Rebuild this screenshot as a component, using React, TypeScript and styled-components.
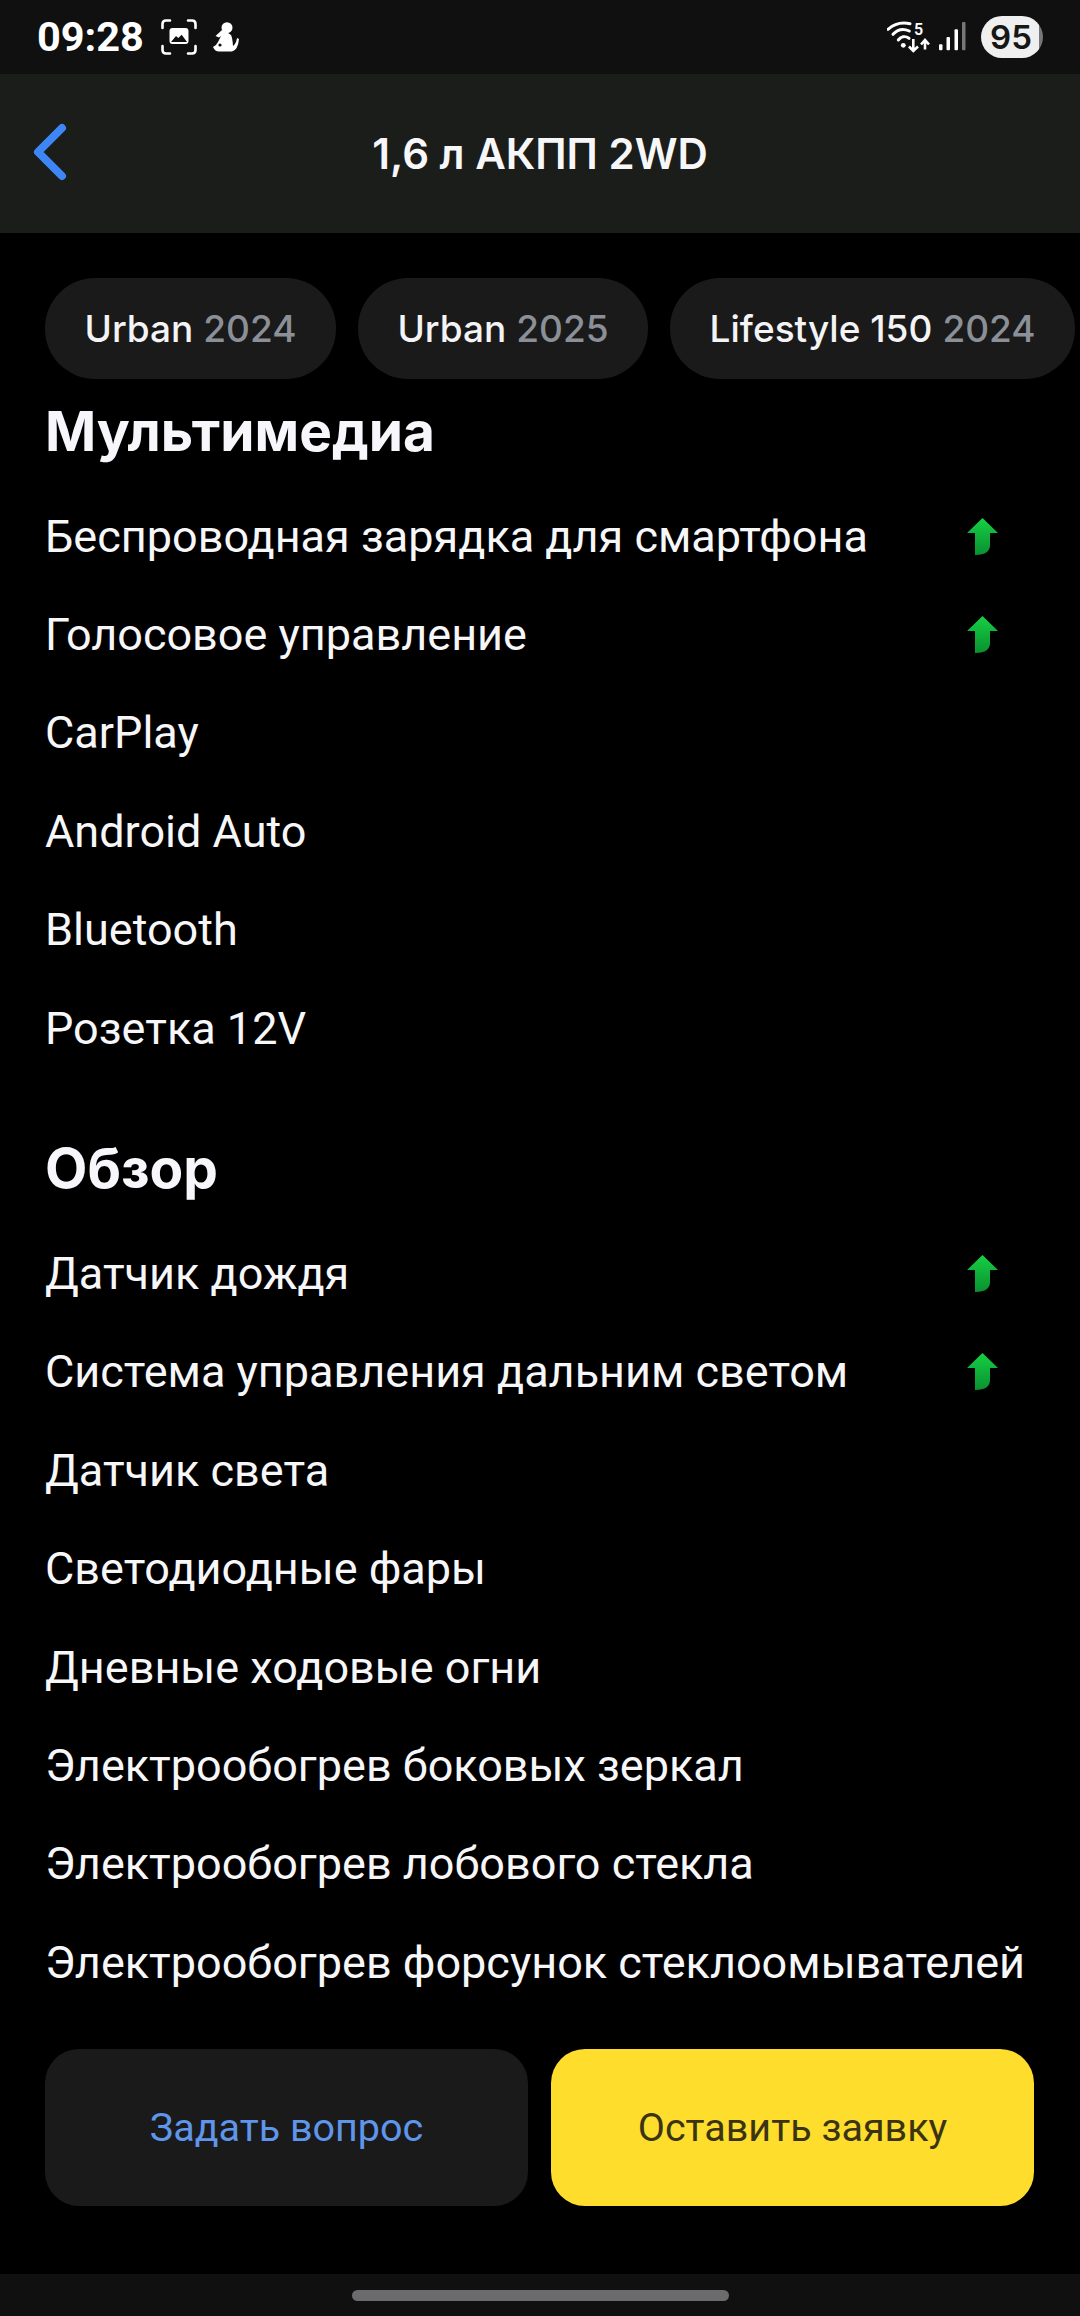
import React from 'react'
import styled, { createGlobalStyle } from 'styled-components'

const GlobalStyle = createGlobalStyle`
  html, body {
    margin: 0;
    padding: 0;
    background: #000;
  }
  * {
    box-sizing: border-box;
  }
`

const Screen = styled.div`
  width: 1080px;
  height: 2316px;
  background: #000;
  display: flex;
  flex-direction: column;
  overflow: hidden;
  font-family: Roboto, "Noto Sans", sans-serif;
  color: #f7f7f9;
`

const StatusBar = styled.div`
  height: 74px;
  background: #101010;
  display: flex;
  align-items: center;
  justify-content: space-between;
  padding: 0 37px;
  flex: none;
`

const StatusGroup = styled.div`
  display: flex;
  align-items: center;
`

const Clock = styled.span`
  font-family: Roboto, sans-serif;
  font-weight: 700;
  font-size: 41.5px;
  line-height: 44px;
  color: #fff;
  margin-right: 17px;
`

const StatusIcon = styled.svg<{ $gap?: number }>`
  display: block;
  margin-right: ${(p) => p.$gap ?? 0}px;
`

const Battery = styled.div`
  width: 62px;
  height: 42px;
  border-radius: 21px;
  background: linear-gradient(90deg, #efefef 93%, #77777a 93%);
  color: #161616;
  font-family: Inter, sans-serif;
  font-weight: 600;
  font-size: 33px;
  display: flex;
  align-items: center;
  justify-content: center;
  padding-right: 2px;
`

const Header = styled.header`
  height: 159px;
  background: #1b1d1b;
  flex: none;
  display: flex;
  align-items: center;
  justify-content: center;
  position: relative;
`

const BackButton = styled.svg`
  position: absolute;
  left: 30px;
  top: 47px;
`

const Title = styled.h1`
  margin: 0;
  font-family: Inter, sans-serif;
  font-weight: 600;
  font-size: 42px;
  color: #f7f7f9;
`

const Chips = styled.div`
  display: flex;
  gap: 22px;
  padding: 45px 0 0 45px;
  flex: none;
`

const Chip = styled.div`
  height: 101px;
  padding: 0 39.5px;
  border-radius: 50px;
  background: #1a1a1a;
  display: flex;
  align-items: center;
  gap: 10px;
  font-family: Inter, sans-serif;
  font-weight: 500;
  font-size: 37px;
  white-space: nowrap;
  flex: none;
  color: #f4f4f6;
`

const Year = styled.span`
  color: #8b9098;
`

const Content = styled.main`
  flex: 1;
  padding-left: 45px;
  display: flex;
  flex-direction: column;
  gap: 39px;
`

const Section = styled.section`
  display: flex;
  flex-direction: column;
`

const Heading = styled.h2`
  margin: 0 0 4px;
  height: 104px;
  line-height: 104px;
  font-family: Inter, sans-serif;
  font-weight: 700;
  font-size: 55px;
  color: #f7f7fb;
`

const Row = styled.div`
  height: 98.4px;
  display: flex;
  align-items: center;
  justify-content: space-between;
  padding-right: 82px;
  font-size: 45px;
  white-space: nowrap;
  color: #f7f7f9;
`

const Actions = styled.div`
  display: flex;
  gap: 23px;
  padding: 0 46px 68px 45px;
  flex: none;
`

const ActionButton = styled.button<{ $primary?: boolean }>`
  flex: 1;
  height: 157px;
  border: none;
  border-radius: 34px;
  background: ${(p) => (p.$primary ? '#ffdd2d' : '#1a1a1a')};
  color: ${(p) => (p.$primary ? '#3a3414' : '#5f95ea')};
  font-family: Roboto, sans-serif;
  font-size: 39.5px;
`

const NavBar = styled.div`
  height: 42px;
  background: #101010;
  flex: none;
  display: flex;
  justify-content: center;
  padding-top: 16px;
`

const NavHandle = styled.div`
  width: 377px;
  height: 11px;
  border-radius: 6px;
  background: #6b6b6d;
`

const UpArrow = () => (
  <svg width="31" height="37" viewBox="0 0 31 37">
    <defs>
      <linearGradient id="arrowGreen" x1="0" y1="0" x2="0" y2="1">
        <stop offset="0" stopColor="#16d044" />
        <stop offset="1" stopColor="#0a9030" />
      </linearGradient>
    </defs>
    <path d="M15.5 0L31 15H23V27C23 33 19 37 8 37V15H0Z" fill="url(#arrowGreen)" />
  </svg>
)

const multimedia = [
  { name: 'Беспроводная зарядка для смартфона', up: true },
  { name: 'Голосовое управление', up: true },
  { name: 'CarPlay' },
  { name: 'Android Auto' },
  { name: 'Bluetooth' },
  { name: 'Розетка 12V' },
]

const overview = [
  { name: 'Датчик дождя', up: true },
  { name: 'Система управления дальним светом', up: true },
  { name: 'Датчик света' },
  { name: 'Светодиодные фары' },
  { name: 'Дневные ходовые огни' },
  { name: 'Электрообогрев боковых зеркал' },
  { name: 'Электрообогрев лобового стекла' },
  { name: 'Электрообогрев форсунок стеклоомывателей' },
]

const chips = [
  { name: 'Urban', year: '2024' },
  { name: 'Urban', year: '2025' },
  { name: 'Lifestyle 150', year: '2024' },
]

const FeatureList = ({ title, items }: { title: string; items: { name: string; up?: boolean }[] }) => (
  <Section>
    <Heading>{title}</Heading>
    {items.map((item) => (
      <Row key={item.name}>
        <span>{item.name}</span>
        {item.up && <UpArrow />}
      </Row>
    ))}
  </Section>
)

const App = () => (
  <Screen>
    <GlobalStyle />
    <StatusBar>
      <StatusGroup>
        <Clock>09:28</Clock>
        <StatusIcon $gap={16} width="36" height="36" viewBox="0 0 36 36" fill="none">
          <path d="M1.5 9V5Q1.5 1.5 5 1.5H9M27 1.5H31Q34.5 1.5 34.5 5V9M34.5 27V31Q34.5 34.5 31 34.5H27M9 34.5H5Q1.5 34.5 1.5 31V27" stroke="#fff" strokeWidth="2.6" strokeLinecap="round" />
          <rect x="8.5" y="9" width="19" height="16" rx="3" fill="#fff" />
          <path d="M10 23L15 17L17.3 19L20.7 15.7L26 23Z" fill="#101010" />
        </StatusIcon>
        <StatusIcon width="26" height="30" viewBox="0 0 26 30" fill="#fff">
          <circle cx="14" cy="5.7" r="5.5" />
          <path d="M9 8L2.5 14L6 15.5L8 14L5 20Q3 24 0 25Q2 29.5 6 29.5H19Q25 28 26 17L24 16Q23 22 20 24Q19.5 16 18 13Q15 10 9 8Z" />
          <circle cx="7" cy="23" r="1.6" fill="#101010" />
        </StatusIcon>
      </StatusGroup>
      <StatusGroup>
        <StatusIcon $gap={9} width="43" height="32" viewBox="0 0 43 32" fill="none">
          <path d="M1 8.3C7 3 15 1 23 2.7" stroke="#fff" strokeWidth="3" strokeLinecap="round" />
          <path d="M6 13.3C10 9 16 7 22.3 10" stroke="#fff" strokeWidth="3" strokeLinecap="round" />
          <path d="M11.3 19C14 15.5 18 14.5 22 17.3" stroke="#fff" strokeWidth="3" strokeLinecap="round" />
          <circle cx="16.3" cy="24.3" r="2.4" fill="#fff" />
          <path d="M26.3 18V29.5M22 25.5L26.3 30L31 25.5" stroke="#fff" strokeWidth="2.6" />
          <path d="M38 28.5V19.5M34 23.5L38 19L42 23.5" stroke="#fff" strokeWidth="2.6" />
          <text x="27" y="14" fill="#fff" fontFamily="Roboto, sans-serif" fontWeight="600" fontSize="16">5</text>
        </StatusIcon>
        <StatusIcon $gap={15} width="27" height="30" viewBox="0 0 27 30">
          <rect x="0" y="22.3" width="3.5" height="6" rx="1" fill="#fff" />
          <rect x="7.5" y="15" width="3.5" height="13.3" rx="1" fill="#fff" />
          <rect x="15.5" y="7.3" width="3.5" height="21" rx="1" fill="#fff" />
          <rect x="23" y="0" width="3.5" height="28.3" rx="1" fill="#77777a" />
        </StatusIcon>
        <Battery>95</Battery>
      </StatusGroup>
    </StatusBar>
    <Header>
      <BackButton width="38" height="64" viewBox="0 0 38 64" fill="none">
        <path d="M32 7L8 31L32 55" stroke="#3f86f5" strokeWidth="8" strokeLinecap="round" strokeLinejoin="round" />
      </BackButton>
      <Title>1,6 л АКПП 2WD</Title>
    </Header>
    <Chips>
      {chips.map((chip) => (
        <Chip key={chip.name + chip.year}>
          <span>{chip.name}</span>
          <Year>{chip.year}</Year>
        </Chip>
      ))}
    </Chips>
    <Content>
      <FeatureList title="Мультимедиа" items={multimedia} />
      <FeatureList title="Обзор" items={overview} />
    </Content>
    <Actions>
      <ActionButton>Задать вопрос</ActionButton>
      <ActionButton $primary>Оставить заявку</ActionButton>
    </Actions>
    <NavBar>
      <NavHandle />
    </NavBar>
  </Screen>
)

export default App
